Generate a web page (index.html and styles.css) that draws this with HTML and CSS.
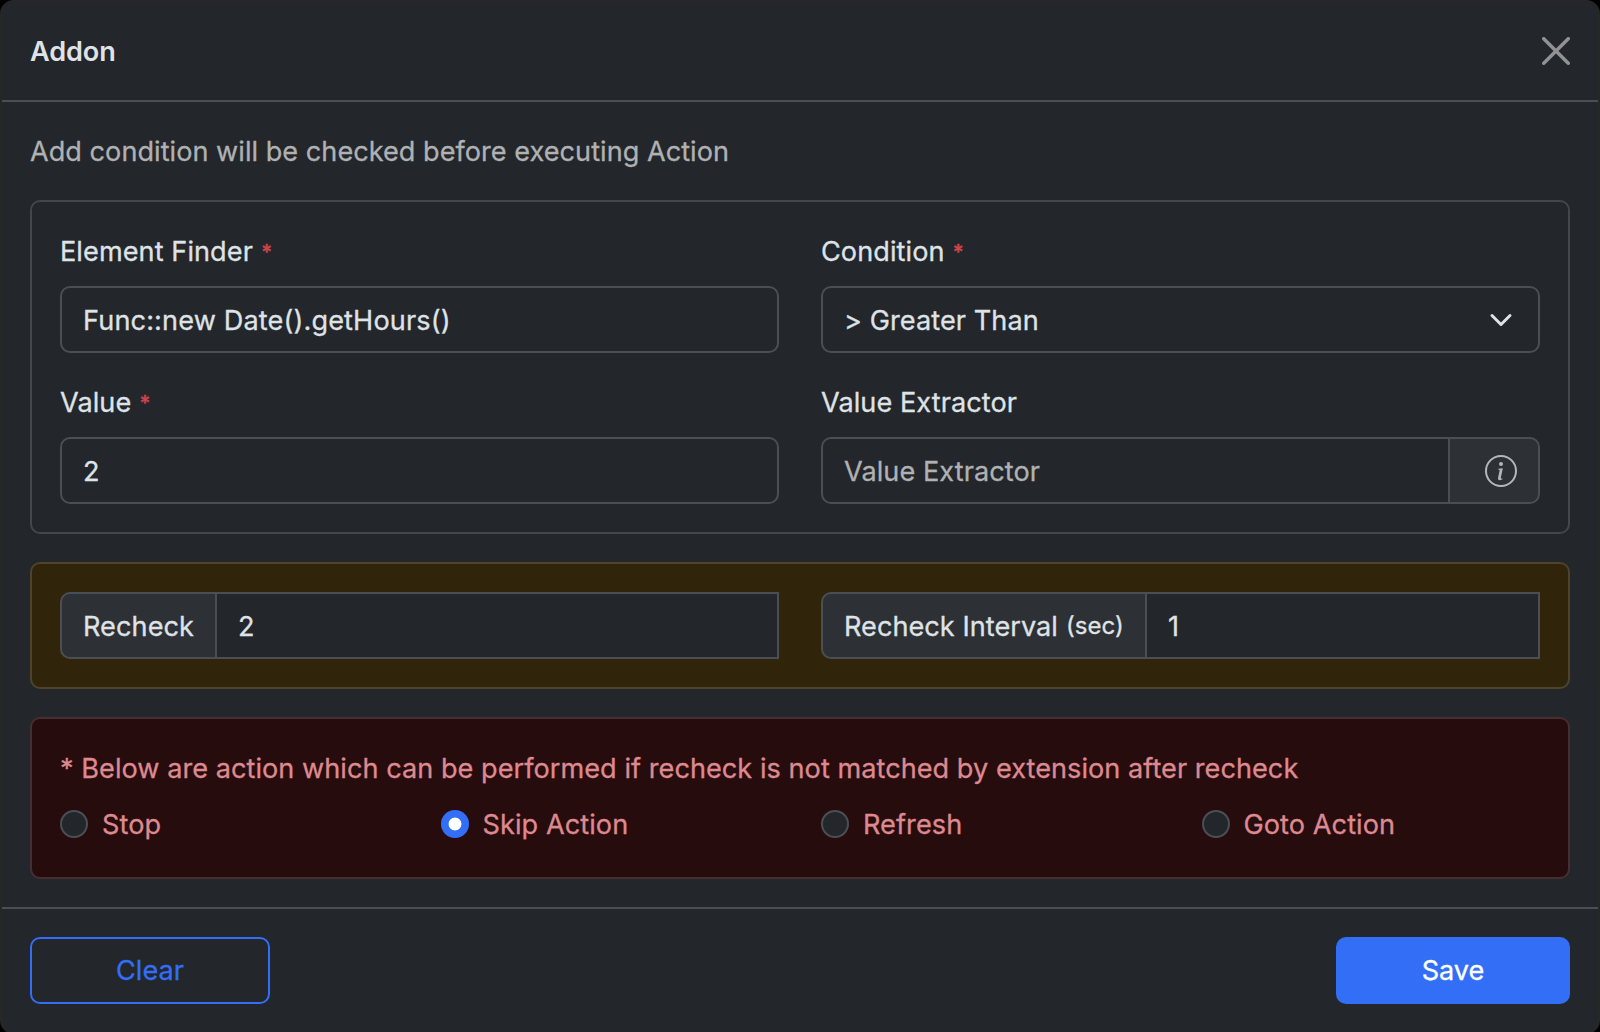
FILE: index.html
```
<!DOCTYPE html>
<html lang="en">
<head>
<meta charset="utf-8">
<title>Addon</title>
<link rel="stylesheet" href="styles.css">
</head>
<body>
<div class="modal">
  <header class="modal-header">
    <h1 class="modal-title"><span>Addon</span></h1>
    <button class="btn-close" aria-label="Close">
      <svg viewBox="0 0 16 16" width="28" height="28" fill="currentColor"><path d="M.293.293a1 1 0 0 1 1.414 0L8 6.586 14.293.293a1 1 0 1 1 1.414 1.414L9.414 8l6.293 6.293a1 1 0 0 1-1.414 1.414L8 9.414l-6.293 6.293a1 1 0 0 1-1.414-1.414L6.586 8 .293 1.707a1 1 0 0 1 0-1.414z"/></svg>
    </button>
  </header>
  <main class="modal-body">
    <p class="lead"><span>Add condition will be checked before executing Action</span></p>
    <section class="card grid">
      <div class="field">
        <div class="label"><span>Element Finder</span><small class="req">*</small></div>
        <div class="control"><span class="code">Func::new Date().getHours()</span></div>
      </div>
      <div class="field">
        <div class="label"><span>Condition</span><small class="req">*</small></div>
        <div class="control select"><span>&gt; Greater Than</span>
          <svg viewBox="0 0 16 16" width="24" height="24" fill="none" stroke="currentColor" stroke-width="2" stroke-linecap="round" stroke-linejoin="round"><path d="m2 5 6 6 6-6"/></svg>
        </div>
      </div>
      <div class="field">
        <div class="label"><span>Value</span><small class="req">*</small></div>
        <div class="control"><span>2</span></div>
      </div>
      <div class="field">
        <div class="label"><span>Value Extractor</span></div>
        <div class="group">
          <div class="control placeholder"><span>Value Extractor</span></div>
          <div class="addon addon-end">
            <svg viewBox="0 0 16 16" width="32" height="32" fill="currentColor"><path d="M8 15A7 7 0 1 1 8 1a7 7 0 0 1 0 14m0 1A8 8 0 1 0 8 0a8 8 0 0 0 0 16"/><path d="m8.930 6.588-2.290.287-.082.380.450.083c.294.070.352.176.288.469l-.738 3.468c-.194.897.105 1.319.808 1.319.545 0 1.178-.252 1.465-.598l.088-.416c-.200.176-.492.246-.686.246-.275 0-.375-.193-.304-.533zM9 4.500a1 1 0 1 1-2 0 1 1 0 0 1 2 0"/></svg>
          </div>
        </div>
      </div>
    </section>
    <section class="card card-warning grid">
      <div class="group">
        <div class="addon addon-recheck"><span>Recheck</span></div>
        <div class="control square"><span>2</span></div>
      </div>
      <div class="group">
        <div class="addon addon-interval"><span>Recheck Interval</span><small class="unit">(sec)</small></div>
        <div class="control square"><span>1</span></div>
      </div>
    </section>
    <section class="card card-danger">
      <p class="note"><span>* Below are action which can be performed if recheck is not matched by extension after recheck</span></p>
      <div class="radios">
        <div class="check"><i class="radio"></i><span>Stop</span></div>
        <div class="check"><i class="radio checked"></i><span>Skip Action</span></div>
        <div class="check"><i class="radio"></i><span>Refresh</span></div>
        <div class="check"><i class="radio"></i><span>Goto Action</span></div>
      </div>
    </section>
  </main>
  <footer class="modal-footer">
    <button class="btn btn-outline">Clear</button>
    <button class="btn btn-primary">Save</button>
  </footer>
</div>
</body>
</html>
```
FILE: styles.css
```
* { box-sizing: border-box; }
html { background: #000; overflow: hidden; }
body { margin: 0; font-family: Inter, "Liberation Sans", sans-serif; font-size: 27.1px; font-weight: 400; letter-spacing: .08px; line-height: 42px; color: #dfe2e6; -webkit-text-stroke: .3px currentColor; }
p, h1 { margin: 0; font-size: inherit; font-weight: inherit; }
button { font: inherit; padding: 0; background: none; border: 0; }
svg { display: block; flex: none; }
span, small { display: block; white-space: pre; }
span { height: 44px; padding-top: 2px; }

.modal { height: 1034px; background: #23262a; border: 2px solid #272728; border-radius: 14px; display: flex; flex-direction: column; }
.modal-header { height: 100px; padding: 0 28px; border-bottom: 2px solid #4b4f54; display: flex; align-items: center; justify-content: space-between; }
.modal-title { font-weight: 600; letter-spacing: -.1px; -webkit-text-stroke: 0; }
.btn-close { color: #909294; }
.modal-body { flex: 1; padding: 28px; display: flex; flex-direction: column; gap: 28px; }
.lead { height: 42px; color: #afb1b3; letter-spacing: .03px; }
.lead span, .label span, .note span { padding-top: 1px; height: 42px; }

.card { border: 2px solid #444649; border-radius: 10px; padding: 28px; }
.card-warning { background: #30250b; border-color: #4f4329; }
.card-danger { background: #270c0e; border-color: #472f31; color: #de898f; height: 162px; }
.grid { display: grid; grid-template-columns: 1fr 1fr; gap: 28px 42px; }

.label { display: flex; gap: 8px; height: 42px; margin-bottom: 14px; }
.req { color: #cb444a; font-size: 21px; font-weight: 600; padding-top: 2px; }
.control { flex: 1; height: 67px; padding: 0 21px; display: flex; align-items: center; border: 2px solid #4b4f54; border-radius: 10px; background: #23262a; }
.code { letter-spacing: .14px; }
.select { justify-content: space-between; padding-right: 25px; }
.placeholder { color: #afb1b3; border-radius: 10px 0 0 10px; }
.group { display: flex; }
.addon { height: 67px; flex: none; display: flex; align-items: center; padding: 0 21px; border: 2px solid #4b4f54; background: #2d3034; border-radius: 10px 0 0 10px; }
.addon-end { width: 92px; margin-left: -2px; border-radius: 0 10px 10px 0; padding-left: 35px; color: #b4b7ba; }
.addon-recheck { width: 157px; }
.addon-interval { width: 326px; gap: 8px; letter-spacing: .04px; }
.unit { font-size: 24px; }
.square { border-radius: 0; margin-left: -2px; }

.note { letter-spacing: .045px; }
.radios { display: grid; grid-template-columns: repeat(4, 380.5px); margin-top: 13px; }
.check { display: flex; align-items: center; gap: 14px; }
.radio { width: 28px; height: 28px; border: 2px solid #4b4f54; border-radius: 50%; background: #23262a; }
.checked { border: 0; background: radial-gradient(circle, #fff 6px, #326ff6 6.8px); }

.modal-footer { height: 125px; flex: none; padding: 28px 28px 0; border-top: 2px solid #4b4f54; display: flex; justify-content: space-between; }
.btn { height: 67px; border-radius: 10px; }
.btn-outline { width: 240px; border: 2px solid #326ff6; color: #326ff6; }
.btn-primary { width: 234px; background: #326ff6; color: #fff; }
```
